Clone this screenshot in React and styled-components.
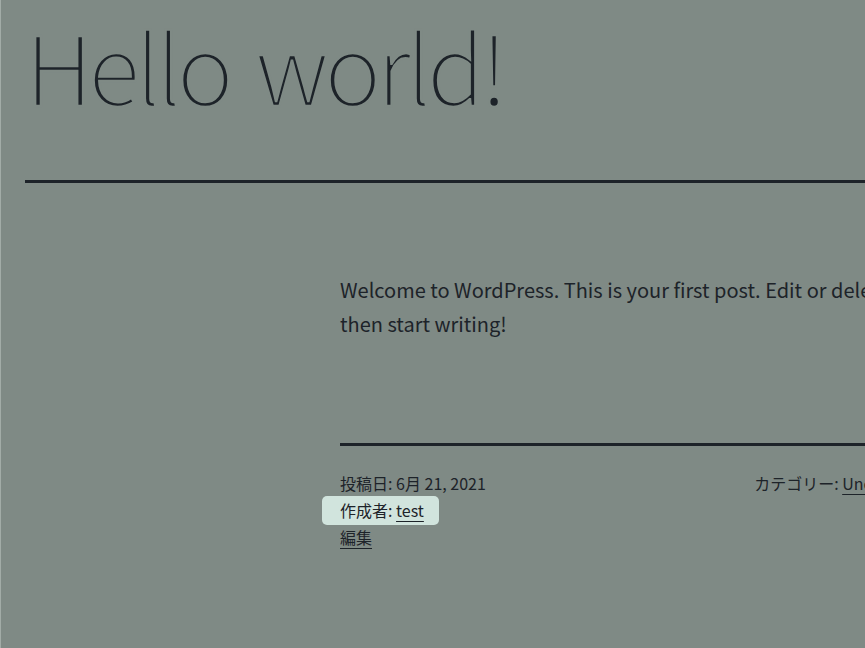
import React from 'react';
import styled, { createGlobalStyle } from "styled-components";

const GlobalStyle = createGlobalStyle`
    html, body {
        margin: 0;
        padding: 0;
        background: #7f8a85;
        overflow: hidden;
    }
    body {
        font-family: "Noto Sans CJK JP", "Noto Sans", sans-serif;
        color: #1d2329;
    }
`

const Page = styled.div`
        width: 1290px;
        min-height: 648px;
        box-sizing: border-box;
        border-left: 1px solid #a2aca7;
        padding: 0 25px 0 24px;
`

const Header = styled.header`
        padding-top: 3px;
        padding-bottom: 52px;
        border-bottom: 3px solid #1d2329;

        h1 {
            margin: 0;
            font-size: 96px;
            font-weight: 300;
            line-height: 1.3;
            letter-spacing: -4.8px;
            word-spacing: 10px;
            /* no light face installed: thin the regular one with a stroke in the page colour */
            -webkit-text-stroke: 2.4px #7f8a85;
        }
`

const Content = styled.div`
        width: 610px;
        margin: 0 auto;
`

const Body = styled.div`
        padding-top: 90px;
        padding-bottom: 102px;
        border-bottom: 3px solid #1d2329;

        p {
            margin: 0;
            font-size: 20px;
            line-height: 1.7;
        }
`

const Footer = styled.footer`
        padding-top: 24px;
        font-size: 16px;
        line-height: 1.7;
`

const MetaRow = styled.div`
        display: flex;
        justify-content: space-between;
`

const Highlight = styled.div`
        width: fit-content;
        margin-left: -18px;
        padding: 1px 15px 1px 18px;
        margin-top: -1px;
        margin-bottom: -1px;
        background: #d1e4dd;
        border-radius: 5px;
`

const Link = styled.a`
        color: inherit;
        text-decoration: underline;
        text-decoration-thickness: 1px;
        text-underline-offset: 4px;
`

const App = () => {
    return <Page>
        <GlobalStyle />
        <Header>
            <h1>Hello world!</h1>
        </Header>
        <Content>
            <Body>
                <p>Welcome to WordPress. This is your first post. Edit or delete it, then start writing!</p>
            </Body>
            <Footer>
                <MetaRow>
                    <span>投稿日: 6月 21, 2021</span>
                    <span>カテゴリー: <Link href="#">Uncategorized</Link></span>
                </MetaRow>
                <Highlight>作成者: <Link href="#">test</Link></Highlight>
                <div><Link href="#">編集</Link></div>
            </Footer>
        </Content>
    </Page>
}

export default App;
